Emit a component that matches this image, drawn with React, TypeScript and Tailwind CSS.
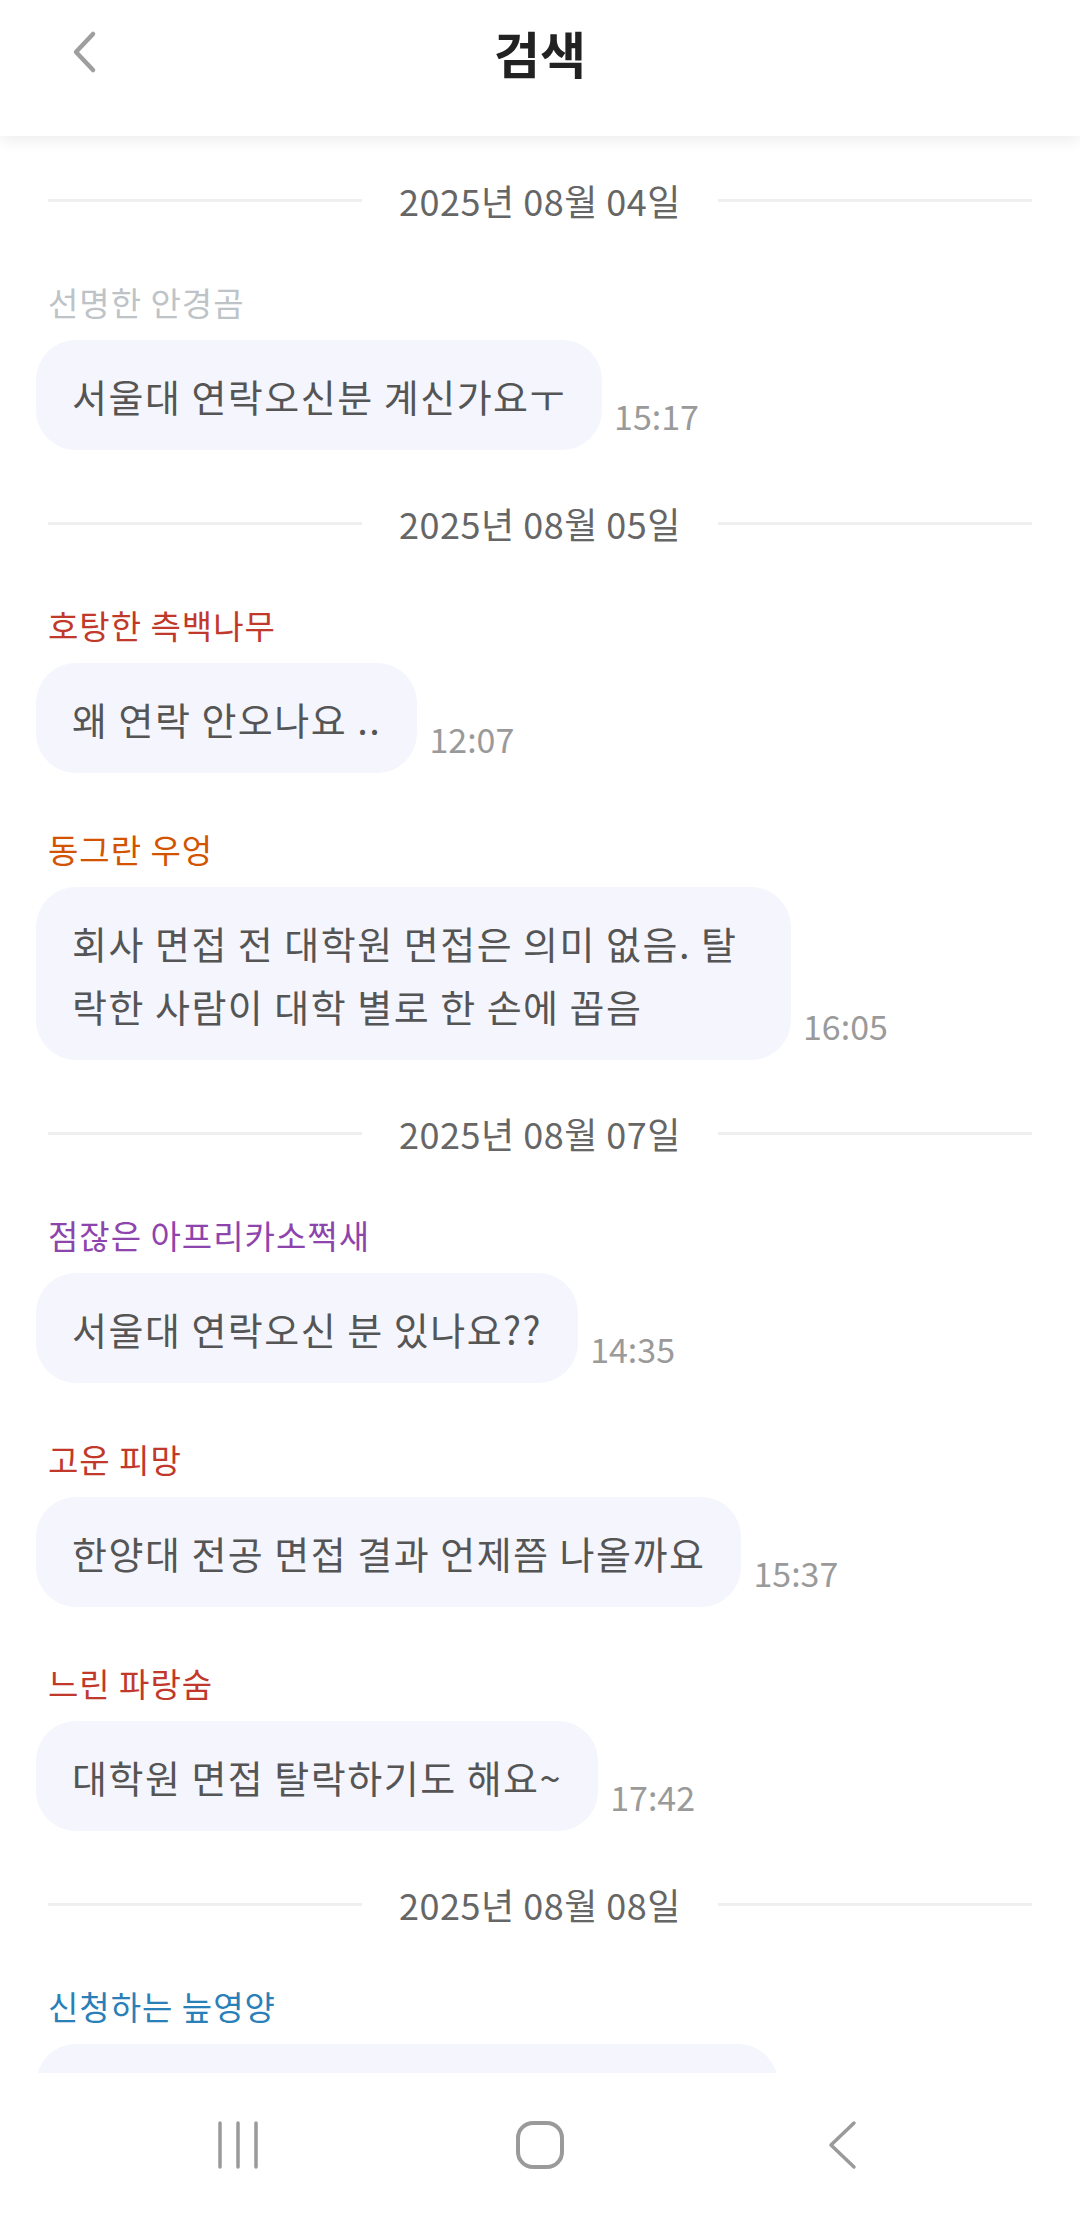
import React from "react";

type Msg = { kind: "msg"; name: string; color: string; lines: string[]; time: string; width?: string };
type DateRow = { kind: "date"; label: string };
type Item = Msg | DateRow;

const items: Item[] = [
  { kind: "date", label: "2025년 08월 04일" },
  { kind: "msg", name: "선명한 안경곰", color: "text-[#bdc3c7]", lines: ["서울대 연락오신분 계신가요ㅜ"], time: "15:17" },
  { kind: "date", label: "2025년 08월 05일" },
  { kind: "msg", name: "호탕한 측백나무", color: "text-[#c0392b]", lines: ["왜 연락 안오나요 .."], time: "12:07" },
  {
    kind: "msg",
    name: "동그란 우엉",
    color: "text-[#d35400]",
    lines: ["회사 면접 전 대학원 면접은 의미 없음. 탈", "락한 사람이 대학 별로 한 손에 꼽음"],
    time: "16:05",
    width: "w-[755px]",
  },
  { kind: "date", label: "2025년 08월 07일" },
  { kind: "msg", name: "점잖은 아프리카소쩍새", color: "text-[#8e44ad]", lines: ["서울대 연락오신 분 있나요??"], time: "14:35" },
  { kind: "msg", name: "고운 피망", color: "text-[#c0392b]", lines: ["한양대 전공 면접 결과 언제쯤 나올까요"], time: "15:37" },
  { kind: "msg", name: "느린 파랑숨", color: "text-[#c0392b]", lines: ["대학원 면접 탈락하기도 해요~"], time: "17:42" },
  { kind: "date", label: "2025년 08월 08일" },
  // last bubble is cut off by the nav bar, its text is not visible
  { kind: "msg", name: "신청하는 늪영양", color: "text-[#2980b9]", lines: [], time: "" },
];

const DateDivider = ({ label, first }: { label: string; first: boolean }) => (
  <div className={`flex items-center h-[48px] px-[48px] gap-[37px] ${first ? "mt-[40px]" : "mt-[49px]"}`}>
    <div className="flex-1 h-[3px] bg-[#efefef]" />
    <span className="text-[36px] leading-[48px] tracking-[0.5px] text-[#666666]">{label}</span>
    <div className="flex-1 h-[3px] bg-[#efefef]" />
  </div>
);

const Message = ({ msg, afterDate }: { msg: Msg; afterDate: boolean }) => (
  <div className={`px-[36px] ${afterDate ? "mt-[58px]" : "mt-[56px]"}`}>
    <div className={`pl-[12px] text-[33px] leading-[40px] tracking-[1px] ${msg.color}`}>{msg.name}</div>
    <div className="flex items-end gap-[12px] mt-[18px]">
      {msg.lines.length > 0 ? (
        <div
          className={`bg-[#f4f5fd] rounded-[40px] px-[36px] py-[23.5px] text-[38px] leading-[63px] tracking-[1.5px] text-[#555555] whitespace-nowrap ${msg.width ?? ""}`}
        >
          {msg.lines.map((l, i) => (
            <div key={i}>{l}</div>
          ))}
        </div>
      ) : (
        <div className="bg-[#f4f5fd] rounded-[40px] w-[742px] h-[110px]" />
      )}
      {msg.time && <span className="text-[34px] leading-[44px] text-[#9a9a9a] pb-[12px]">{msg.time}</span>}
    </div>
  </div>
);

export default function App() {
  return (
    <div
      className="w-[1080px] h-[2217px] bg-white flex flex-col overflow-hidden"
      style={{ fontFamily: '"Noto Sans CJK KR", "Noto Sans", sans-serif' }}
    >
      <header className="relative z-10 h-[136px] shrink-0 bg-white shadow-[0_4px_14px_rgba(0,0,0,0.08)] flex items-start">
        <div className="absolute left-[66px] top-[30px]">
          <svg width="34" height="44" viewBox="0 0 34 44" fill="none">
            <path d="M27 4 L10 22 L27 40" stroke="#9e9e9e" strokeWidth="4.5" strokeLinecap="round" strokeLinejoin="round" />
          </svg>
        </div>
        <h1 className="w-full text-center text-[50px] font-bold leading-[64px] mt-[20px] text-[#222222]">검색</h1>
      </header>

      <main className="flex-1 overflow-hidden">
        {items.map((it, i) =>
          it.kind === "date" ? (
            <DateDivider key={i} label={it.label} first={i === 0} />
          ) : (
            <Message key={i} msg={it} afterDate={items[i - 1]?.kind === "date"} />
          )
        )}
      </main>

      <nav className="h-[144px] shrink-0 bg-white grid grid-cols-[302px_302px_302px] justify-center items-center">
        <div className="flex justify-center">
          <svg width="44" height="50" viewBox="0 0 44 50" fill="none">
            <line x1="4" y1="3" x2="4" y2="47" stroke="#9a9a9a" strokeWidth="3.5" strokeLinecap="round" />
            <line x1="22" y1="3" x2="22" y2="47" stroke="#9a9a9a" strokeWidth="3.5" strokeLinecap="round" />
            <line x1="40" y1="3" x2="40" y2="47" stroke="#9a9a9a" strokeWidth="3.5" strokeLinecap="round" />
          </svg>
        </div>
        <div className="flex justify-center">
          <svg width="50" height="50" viewBox="0 0 50 50" fill="none">
            <rect x="3" y="3" width="44" height="44" rx="15" stroke="#9a9a9a" strokeWidth="4" />
          </svg>
        </div>
        <div className="flex justify-center">
          <svg width="34" height="50" viewBox="0 0 34 50" fill="none">
            <path d="M29 3 L6 25 L29 47" stroke="#9a9a9a" strokeWidth="3.5" strokeLinecap="round" strokeLinejoin="round" />
          </svg>
        </div>
      </nav>
    </div>
  );
}
